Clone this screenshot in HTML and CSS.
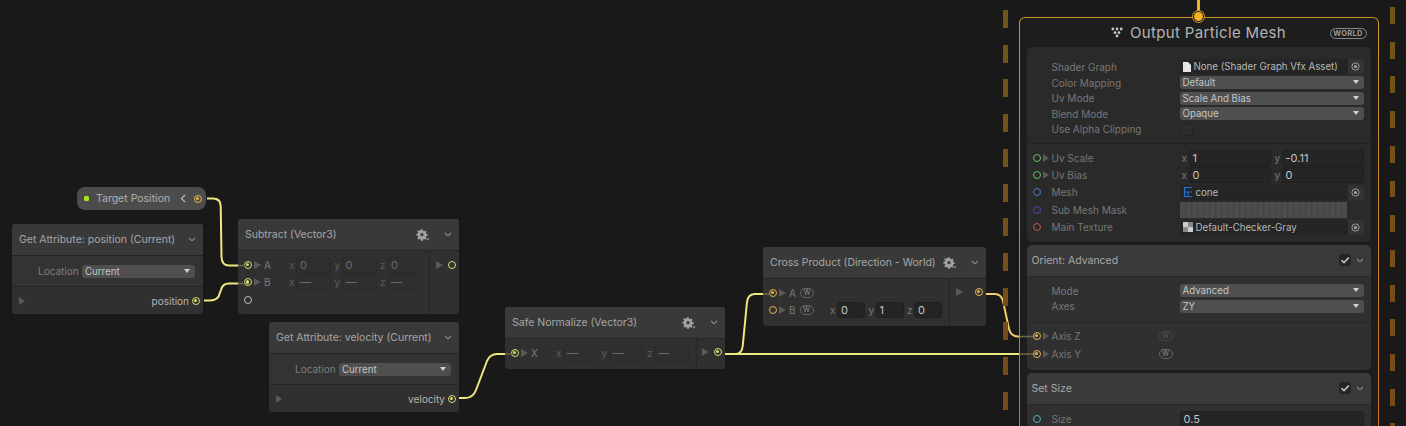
FILE: index.html
```html
<!DOCTYPE html>
<html lang="en">
<head>
  <meta charset="UTF-8" />
  <title>VFX Graph</title>
  <link rel="stylesheet" href="styles.css">
</head>
<body>
  <svg class="defs" width="0" height="0">
    <symbol id="i-gear" viewBox="0 0 14 12">
      <path d="M5 .6h2l.2 1.3 1 .4 1.1-.7 1.3 1.3-.8 1.1.5 1 1.3.2v1.9l-1.3.2-.5 1 .8 1.1-1.3 1.3-1.1-.8-1 .5-.2 1.3H5l-.2-1.3-1-.5-1.1.8L1.400 8.900l.8-1.100-.5-1L.4 6.600V4.700l1.300-.2.5-1-.8-1.100L1.700 1.100l1.100.7 1-.4zM6 4.100a1.600 1.600 0 1 0 0 3.200 1.600 1.600 0 0 0 0-3.200z" fill-rule="evenodd" fill="currentColor"/>
      <path d="M10.500 9.500h3l-1.500 2z" fill="currentColor"/>
    </symbol>
    <symbol id="i-chev" viewBox="0 0 8 5">
      <path d="M1 1l3 2.800L7 1" fill="none" stroke="currentColor" stroke-width="1.100"/>
    </symbol>
    <symbol id="i-target" viewBox="0 0 10 10">
      <circle cx="5" cy="5" r="4" fill="none" stroke="currentColor"/>
      <circle cx="5" cy="5" r="1.700" fill="currentColor"/>
    </symbol>
    <symbol id="i-check" viewBox="0 0 10 10">
      <path d="M1.500 5.200l2.500 2.500 4.800-5.200" fill="none" stroke="currentColor" stroke-width="1.600"/>
    </symbol>
  </svg>

  <div class="canvas">
    <!-- wires, under the nodes -->
    <svg class="wires" width="1406" height="426">
      <defs>
        <linearGradient id="w-gold" gradientUnits="userSpaceOnUse" x1="0" y1="198" x2="0" y2="265">
          <stop offset="0" stop-color="#f4c65a"/>
          <stop offset="1" stop-color="#efe57a"/>
        </linearGradient>
        <linearGradient id="w-cross" gradientUnits="userSpaceOnUse" x1="735" y1="354" x2="770" y2="294">
          <stop offset="0" stop-color="#efe87e"/>
          <stop offset="1" stop-color="#f2cf68"/>
        </linearGradient>
      </defs>
      <path class="wire" stroke="url(#w-gold)" d="M207 198.500H213Q220.500 198.500 220.700 206L221.500 257Q221.800 265.500 229 265.500H240"/>
      <path class="wire" d="M204 300.500H210Q218.500 300.500 219.800 293L221 290Q222.500 283.500 229 283.500H240"/>
      <path class="wire" d="M459 398H465Q473 398 476 390L487 361Q490 354 497 354H507"/>
      <path class="wire" d="M725 354H1019"/>
      <path class="wire" stroke="url(#w-cross)" d="M725 354H735Q742 354 742.700 346L747 302Q748 294 755 294H765"/>
      <path class="wire wire-gold" d="M984 294H995Q1001 294 1003 301L1009 329Q1011 336.500 1018 336.500H1021"/>
    </svg>

    <div class="dash dash-left"></div>
    <div class="dash dash-right"></div>

    <div class="pill">
      <span class="pill-dot"></span>
      <span class="pill-name">Target Position</span>
      <svg class="pill-chev" width="6" height="9" viewBox="0 0 6 9"><path d="M5 1L1.500 4.500 5 8" fill="none" stroke="currentColor" stroke-width="1.200"/></svg>
      <span class="port gold on"></span>
    </div>

    <div class="node n-position">
      <div class="node-head">
        <span class="node-title">Get Attribute: position (Current)</span>
        <svg class="chev" width="8" height="5"><use href="#i-chev"/></svg>
      </div>
      <div class="setting">
        <span class="setting-label">Location</span>
        <span class="drop">Current</span>
      </div>
      <div class="attr-out">
        <span class="tri"></span>
        <span class="attr-name">position</span>
        <span class="port yellow on"></span>
      </div>
    </div>

    <div class="node n-subtract">
      <div class="node-head">
        <span class="node-title">Subtract (Vector3)</span>
        <svg class="gear" width="14" height="12"><use href="#i-gear"/></svg>
        <svg class="chev" width="8" height="5"><use href="#i-chev"/></svg>
      </div>
      <div class="node-body">
        <div class="inputs">
          <div class="in-row">
            <span class="port yellow on"></span><span class="tri"></span><span class="in-name">A</span>
            <div class="vec dim">
              <span class="axis">x</span><span class="num">0</span>
              <span class="axis">y</span><span class="num">0</span>
              <span class="axis">z</span><span class="num">0</span>
            </div>
          </div>
          <div class="in-row">
            <span class="port yellow on"></span><span class="tri"></span><span class="in-name">B</span>
            <div class="vec dim">
              <span class="axis">x</span><span class="num">—</span>
              <span class="axis">y</span><span class="num">—</span>
              <span class="axis">z</span><span class="num">—</span>
            </div>
          </div>
          <div class="in-row">
            <span class="port white"></span>
          </div>
        </div>
        <div class="outputs">
          <span class="tri"></span><span class="port yellow"></span>
        </div>
      </div>
    </div>

    <div class="node n-velocity">
      <div class="node-head">
        <span class="node-title">Get Attribute: velocity (Current)</span>
        <svg class="chev" width="8" height="5"><use href="#i-chev"/></svg>
      </div>
      <div class="setting">
        <span class="setting-label">Location</span>
        <span class="drop">Current</span>
      </div>
      <div class="attr-out">
        <span class="tri"></span>
        <span class="attr-name">velocity</span>
        <span class="port yellow on"></span>
      </div>
    </div>

    <div class="node n-normalize">
      <div class="node-head">
        <span class="node-title">Safe Normalize (Vector3)</span>
        <svg class="gear" width="14" height="12"><use href="#i-gear"/></svg>
        <svg class="chev" width="8" height="5"><use href="#i-chev"/></svg>
      </div>
      <div class="node-body">
        <div class="inputs">
          <div class="in-row">
            <span class="port yellow on"></span><span class="tri"></span><span class="in-name">X</span>
            <div class="vec dim">
              <span class="axis">x</span><span class="num">—</span>
              <span class="axis">y</span><span class="num">—</span>
              <span class="axis">z</span><span class="num">—</span>
            </div>
          </div>
        </div>
        <div class="outputs">
          <span class="tri"></span><span class="port yellow on"></span>
        </div>
      </div>
    </div>

    <div class="node n-cross">
      <div class="node-head">
        <span class="node-title">Cross Product (Direction - World)</span>
        <svg class="gear" width="14" height="12"><use href="#i-gear"/></svg>
        <svg class="chev" width="8" height="5"><use href="#i-chev"/></svg>
      </div>
      <div class="node-body">
        <div class="inputs">
          <div class="in-row">
            <span class="port gold on"></span><span class="tri"></span><span class="in-name">A</span><span class="w-badge">W</span>
          </div>
          <div class="in-row">
            <span class="port gold"></span><span class="tri"></span><span class="in-name">B</span><span class="w-badge">W</span>
            <div class="vec">
              <span class="axis">x</span><span class="num">0</span>
              <span class="axis">y</span><span class="num">1</span>
              <span class="axis">z</span><span class="num">0</span>
            </div>
          </div>
        </div>
        <div class="outputs">
          <span class="tri"></span><span class="port gold on"></span>
        </div>
      </div>
    </div>

    <div class="flow-in"></div>
    <div class="context">
      <div class="flow-port"></div>
      <div class="ctx-head">
        <svg class="ctx-icon" width="12" height="11" viewBox="0 0 12 11">
          <circle cx="1.800" cy="2" r="1.400"/><circle cx="6" cy="2" r="1.400"/><circle cx="10.200" cy="2" r="1.400"/>
          <circle cx="4" cy="5.700" r="1.400"/><circle cx="8" cy="5.700" r="1.400"/><circle cx="6" cy="9" r="1.400"/>
        </svg>
        <span class="ctx-title">Output Particle Mesh</span>
        <span class="world">WORLD</span>
      </div>

      <div class="block block-main">
        <div class="settings">
          <div class="prop first">
            <span class="gutter"></span><span class="label">Shader Graph</span>
            <div class="value obj">
              <svg class="file" width="8" height="10" viewBox="0 0 8 10"><path d="M0 0h5l3 3v7H0z" fill="#e6e6e6"/></svg>
              <span>None (Shader Graph Vfx Asset)</span>
              <button class="pick"><svg width="9" height="9"><use href="#i-target"/></svg></button>
            </div>
          </div>
          <div class="prop">
            <span class="gutter"></span><span class="label">Color Mapping</span>
            <div class="value"><span class="drop">Default</span></div>
          </div>
          <div class="prop">
            <span class="gutter"></span><span class="label">Uv Mode</span>
            <div class="value"><span class="drop">Scale And Bias</span></div>
          </div>
          <div class="prop">
            <span class="gutter"></span><span class="label">Blend Mode</span>
            <div class="value"><span class="drop">Opaque</span></div>
          </div>
          <div class="prop">
            <span class="gutter"></span><span class="label">Use Alpha Clipping</span>
            <div class="value"><span class="box"></span></div>
          </div>
        </div>
        <div class="slots">
          <div class="prop slot">
            <span class="gutter"><span class="port green"></span><span class="tri"></span></span><span class="label">Uv Scale</span>
            <div class="value pair">
              <span class="axis">x</span><span class="num">1</span>
              <span class="axis">y</span><span class="num">-0.11</span>
            </div>
          </div>
          <div class="prop slot">
            <span class="gutter"><span class="port green"></span><span class="tri"></span></span><span class="label">Uv Bias</span>
            <div class="value pair">
              <span class="axis">x</span><span class="num">0</span>
              <span class="axis">y</span><span class="num">0</span>
            </div>
          </div>
          <div class="prop slot">
            <span class="gutter"><span class="port blue"></span></span><span class="label">Mesh</span>
            <div class="value obj">
              <svg class="mesh" width="10" height="10" viewBox="0 0 10 10"><path d="M1 .5h8M1 5h8M1 9.500h8M1.500 0v10" fill="none" stroke="#1f74d8" stroke-width="1.200"/><path d="M5 5v4.500" stroke="#1f74d8"/></svg>
              <span>cone</span>
              <button class="pick"><svg width="9" height="9"><use href="#i-target"/></svg></button>
            </div>
          </div>
          <div class="prop slot">
            <span class="gutter"><span class="port purple"></span></span><span class="label">Sub Mesh Mask</span>
            <div class="value"><span class="mask"></span></div>
          </div>
          <div class="prop slot">
            <span class="gutter"><span class="port red"></span></span><span class="label">Main Texture</span>
            <div class="value obj">
              <span class="checker"></span>
              <span>Default-Checker-Gray</span>
              <button class="pick"><svg width="9" height="9"><use href="#i-target"/></svg></button>
            </div>
          </div>
        </div>
      </div>

      <div class="block">
        <div class="block-head">
          <span class="block-title">Orient: Advanced</span>
          <span class="toggle"><svg width="10" height="10"><use href="#i-check"/></svg></span>
          <svg class="chev" width="8" height="5"><use href="#i-chev"/></svg>
        </div>
        <div class="settings settings-b">
          <div class="prop">
            <span class="gutter"></span><span class="label">Mode</span>
            <div class="value"><span class="drop">Advanced</span></div>
          </div>
          <div class="prop">
            <span class="gutter"></span><span class="label">Axes</span>
            <div class="value"><span class="drop">ZY</span></div>
          </div>
        </div>
        <div class="slots slots-b">
          <div class="prop axis-row">
            <span class="gutter"><span class="port gold on"></span><span class="tri"></span></span><span class="label label-w">Axis Z</span>
            <span class="w-badge w-dim">W</span>
          </div>
          <div class="prop axis-row">
            <span class="gutter"><span class="port gold on"></span><span class="tri"></span></span><span class="label label-w">Axis Y</span>
            <span class="w-badge">W</span>
          </div>
        </div>
      </div>

      <div class="block">
        <div class="block-head">
          <span class="block-title">Set Size</span>
          <span class="toggle"><svg width="10" height="10"><use href="#i-check"/></svg></span>
          <svg class="chev" width="8" height="5"><use href="#i-chev"/></svg>
        </div>
        <div class="slots slots-c">
          <div class="prop axis-row">
            <span class="gutter"><span class="port teal"></span></span><span class="label">Size</span>
            <div class="value"><span class="num wide">0.5</span></div>
          </div>
        </div>
      </div>
    </div>

    <!-- dimmed ends of the wires, over the nodes -->
    <svg class="wires wires-top" width="1406" height="426">
      <path class="stub" d="M238 265.500H245M238 283.500H245M505 354H512M763 294H770"/>
      <path class="stub" d="M1020 336.500H1033M1020 354H1033"/>
    </svg>
  </div>
</body>
</html>
```

FILE: styles.css
```css
* {
  box-sizing: border-box;
}
html, body {
  margin: 0;
  height: 100%;
  overflow: hidden;
}
body {
  background: #191919;
  font-family: Inter, "Noto Sans", sans-serif;
  font-size: 10px;
  color: #c0c0c0;
}
.defs {
  position: absolute;
}
.canvas {
  position: relative;
  width: 1406px;
  height: 426px;
  overflow: hidden;
}

/* wires */
.wires {
  position: absolute;
  left: 0;
  top: 0;
}
.wires-top {
  pointer-events: none;
}
.wire {
  fill: none;
  stroke: #efe87e;
  stroke-width: 2;
}
.wire-gold {
  stroke: #f2cf68;
}
.stub {
  fill: none;
  stroke: #6d6a4c;
  stroke-width: 1.500;
}

/* dashed group lines */
.dash {
  position: absolute;
  top: 0;
  width: 5px;
  height: 426px;
  background: linear-gradient(#6e5518, #7a4a1c);
}
.dash-left {
  left: 1002.500px;
  -webkit-mask-image: repeating-linear-gradient(to bottom, transparent 0 10px, #000 10px 28px, transparent 28px 34.700px);
  mask-image: repeating-linear-gradient(to bottom, transparent 0 10px, #000 10px 28px, transparent 28px 34.700px);
}
.dash-right {
  left: 1390px;
  -webkit-mask-image: repeating-linear-gradient(to bottom, transparent 0 7px, #000 7px 24px, transparent 24px 34.700px);
  mask-image: repeating-linear-gradient(to bottom, transparent 0 7px, #000 7px 24px, transparent 24px 34.700px);
}

/* ports */
.port {
  position: relative;
  flex: none;
  display: block;
  width: 8px;
  height: 8px;
  border-radius: 50%;
  border: 1.300px solid #bbb;
}
.port.on::after {
  content: "";
  position: absolute;
  left: 1px;
  top: 1px;
  width: 3.400px;
  height: 3.400px;
  border-radius: 50%;
  background: currentColor;
}
.yellow { border-color: #d9dc74; color: #d9dc74; }
.gold { border-color: #e6b44c; color: #e6b44c; }
.white { border-color: #bdbdbd; }
.green { border-color: #70b96f; }
.blue { border-color: #4f78c4; }
.purple { border-color: #5446b8; }
.red { border-color: #c45a5f; }
.teal { border-color: #4fb3ae; }

.tri {
  flex: none;
  display: block;
  width: 0;
  height: 0;
  border-style: solid;
  border-width: 4px 0 4px 7px;
  border-color: transparent transparent transparent #5a5a5a;
}

/* graph nodes */
.node {
  position: absolute;
  background: #303030;
  border-radius: 3px;
}
.n-position { left: 12px; top: 224px; width: 191px; height: 90px; }
.n-subtract { left: 238px; top: 219px; width: 221px; height: 95px; }
.n-velocity { left: 269px; top: 322px; width: 190px; height: 90px; }
.n-normalize { left: 505px; top: 307px; width: 220px; height: 62px; }
.n-cross { left: 763px; top: 247px; width: 223px; height: 79px; }

.node-head {
  display: flex;
  align-items: center;
  height: 32px;
  padding: 0 7px;
  background: #393939;
  border-bottom: 1px solid #252525;
  border-radius: 3px 3px 0 0;
}
.node-title {
  flex: 1;
  font-size: 10.500px;
  color: #a6a6a6;
  white-space: nowrap;
}
.gear {
  color: #a0a0a0;
  margin-right: 14px;
}
.chev {
  flex: none;
  color: #8a8a8a;
}
.setting {
  display: flex;
  align-items: center;
  height: 31px;
  padding: 0 8px 0 26px;
  background: #333;
  border-bottom: 1px solid #262626;
}
.setting-label {
  width: 44px;
  color: #7d7d7d;
}
.node .drop {
  flex: 1;
}
.attr-out {
  display: flex;
  align-items: center;
  height: 27px;
  padding: 0 3px 0 7px;
}
.attr-out .tri {
  border-width: 4px 0 4px 6px;
}
.attr-name {
  margin-left: auto;
  margin-right: 3px;
  color: #b4b4b4;
}

.node-body {
  display: flex;
  height: calc(100% - 32px);
}
.inputs {
  flex: 1;
  padding: 5px 7px 0 6px;
}
.outputs {
  display: flex;
  align-items: flex-start;
  justify-content: flex-end;
  gap: 5px;
  flex: none;
  width: 30px;
  padding: 10px 3px 0 0;
  border-left: 1px solid #262626;
}
.in-row {
  display: flex;
  align-items: center;
  height: 17.500px;
}
.in-row .tri {
  margin-left: 2px;
}
.in-name {
  margin-left: 3px;
  color: #7a7a7a;
}
.n-normalize .outputs {
  width: 29px;
  padding-top: 9px;
}
.n-cross .outputs {
  width: 37px;
  gap: 12px;
  padding-top: 9px;
}

.vec {
  display: flex;
  align-items: center;
  margin-left: auto;
}
.axis {
  width: 7px;
  color: #777;
}
.num {
  display: block;
  flex: none;
  width: 35px;
  height: 16px;
  margin-right: 3.500px;
  padding-left: 3px;
  line-height: 15px;
  font-size: 11px;
  color: #c4c4c4;
  background: #292929;
  border-radius: 3px;
  border: 1px solid #232323;
}
.vec .num:last-child {
  margin-right: 0;
}
.vec.dim .num {
  background: #2f2f2f;
  border-color: #2a2a2a;
  color: #6a6a6a;
}
.vec.dim .axis {
  color: #5c5c5c;
}
.n-cross .vec .num {
  width: 28px;
  background: #252525;
  border-color: #1f1f1f;
}

.w-badge {
  display: block;
  flex: none;
  width: 14px;
  height: 10px;
  margin-left: 4px;
  border: 1px solid #666;
  border-radius: 5px;
  font-size: 7px;
  line-height: 8px;
  text-align: center;
  color: #8a8a8a;
}
.w-dim {
  border-color: #484848;
  color: #5a5a5a;
}

/* exposed property pill */
.pill {
  position: absolute;
  left: 77px;
  top: 187px;
  display: flex;
  align-items: center;
  width: 129px;
  height: 23px;
  padding: 0 4px 0 7px;
  background: #4c4c4c;
  border-radius: 8px;
}
.pill-dot {
  width: 5px;
  height: 5px;
  border-radius: 1.500px;
  background: #a6e81a;
}
.pill-name {
  flex: 1;
  margin-left: 7px;
  font-size: 10.500px;
  color: #b0b0b0;
}
.pill-chev {
  margin-right: 8px;
  color: #b8b8b8;
}

/* dropdowns */
.drop {
  position: relative;
  display: block;
  width: 100%;
  height: 13px;
  padding-left: 3px;
  line-height: 13px;
  font-size: 9.700px;
  color: #c6c6c6;
  background: #4f4f4f;
  border-radius: 3px;
}
.drop::after {
  content: "";
  position: absolute;
  right: 5px;
  top: 4px;
  border-style: solid;
  border-width: 4px 3.500px 0 3.500px;
  border-color: #d0d0d0 transparent transparent transparent;
}

/* context */
.flow-in {
  position: absolute;
  left: 1197px;
  top: 0;
  width: 3px;
  height: 17px;
  background: #f5b021;
}
.context {
  position: absolute;
  left: 1018.500px;
  top: 16.500px;
  width: 360px;
  height: 430px;
  padding: 0 7px;
  background: linear-gradient(#1d1d1d, #1d1d1d) padding-box, linear-gradient(#c8962a, #cc6f2a) border-box;
  border: 1.500px solid transparent;
  border-radius: 6px;
}
.flow-port {
  position: absolute;
  left: 174px;
  top: -5.500px;
  width: 9px;
  height: 9px;
  border-radius: 50%;
  background: #f5b021;
  box-shadow: 0 0 0 1px #1d1d1d, 0 0 0 2px #c8962a;
}
.ctx-head {
  position: relative;
  display: flex;
  align-items: center;
  justify-content: center;
  gap: 7px;
  height: 29.500px;
}
.ctx-icon {
  fill: #c4c4c4;
}
.ctx-title {
  font-size: 15px;
  letter-spacing: 0.350px;
  color: #b4b4b4;
}
.world {
  position: absolute;
  right: 4px;
  top: 10px;
  width: 37px;
  height: 11px;
  border: 1px solid #8a8a8a;
  border-radius: 6px;
  font-size: 7.500px;
  font-weight: 700;
  line-height: 9px;
  letter-spacing: 0.300px;
  text-align: center;
  color: #9a9a9a;
}

.block {
  margin-bottom: 3px;
  background: #303030;
  border-radius: 5px;
}
.block-main {
  background: #2a2a2a;
}
.block-head {
  display: flex;
  align-items: center;
  height: 32px;
  padding: 0 7px 0 5px;
  background: #3a3a3a;
  border-bottom: 1px solid #272727;
  border-radius: 5px 5px 0 0;
}
.block-title {
  flex: 1;
  font-size: 10.500px;
  color: #a8a8a8;
}
.toggle {
  display: flex;
  align-items: center;
  justify-content: center;
  width: 12px;
  height: 12px;
  margin-right: 5px;
  background: #252525;
  border-radius: 2px;
  color: #c8c8c8;
}

.settings {
  padding: 11px 0 6px;
  border-bottom: 1px solid #232323;
}
.settings-b {
  padding: 6px 0 8px;
  border-bottom-color: #272727;
}
.slots {
  padding: 5px 0 6px;
}
.slots-b {
  padding: 4px 0 7px;
}
.slots-c {
  padding: 5px 0 0;
}
.prop {
  display: flex;
  align-items: center;
  height: 15.500px;
  padding-right: 7px;
}
.prop.first {
  height: 17px;
}
.prop.slot {
  height: 17.400px;
}
.prop.axis-row {
  height: 18px;
}
.gutter {
  display: flex;
  align-items: center;
  gap: 2px;
  flex: none;
  width: 25px;
  padding-left: 6px;
}
.gutter .tri {
  border-width: 4px 0 4px 6.500px;
}
.label {
  flex: none;
  width: 128px;
  color: #777;
  white-space: nowrap;
}
.label-w {
  width: 103px;
}
.value {
  flex: 1;
  display: flex;
  align-items: center;
  min-width: 0;
}
.obj {
  height: 15px;
  padding-left: 3px;
  gap: 3px;
  font-size: 9.700px;
  color: #b8b8b8;
  background: #252525;
  border-radius: 3px;
}
.obj span {
  flex: 1;
  white-space: nowrap;
}
.obj .checker {
  flex: none;
  width: 10px;
  height: 10px;
  background: conic-gradient(#888 25%, #ccc 0 50%, #888 0 75%, #ccc 0);
}
.pick {
  display: flex;
  align-items: center;
  justify-content: center;
  flex: none;
  width: 16px;
  height: 15px;
  padding: 0;
  color: #a8a8a8;
  background: #333;
  border: 0;
  border-radius: 0 3px 3px 0;
}
.box {
  display: block;
  width: 13px;
  height: 13px;
  background: #2c2c2c;
  border: 1px solid #242424;
  border-radius: 2px;
}
.pair {
  padding-left: 2px;
}
.pair .num {
  flex: 1;
  height: 16px;
  margin-right: 4px;
  background: #252525;
  border-color: #1f1f1f;
}
.pair .num:last-child {
  margin-right: 0;
}
.mask {
  display: block;
  width: 167px;
  height: 16px;
  background: repeating-linear-gradient(to right, #4c4c4c 0 5px, #434343 5px 6px);
}
.num.wide {
  width: 100%;
  margin: 0;
  background: #252525;
  border-color: #1f1f1f;
}
```
